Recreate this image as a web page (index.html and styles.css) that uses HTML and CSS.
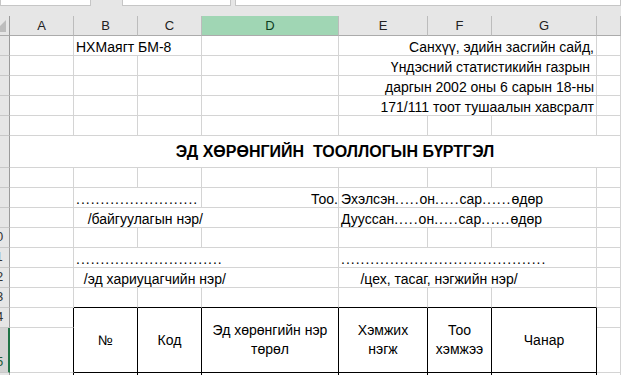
FILE: index.html
```html
<!doctype html>
<html lang="mn">
<head>
	<meta charset="UTF-8">
	<title>БМ-8</title>
	<link rel="stylesheet" href="styles.css">
</head>
<body>
<!--томьёоны мөр-->
<div class="topbar">
	<div class="box name"></div>
	<div class="box fx"></div>
	<div class="box formula"></div>
</div>
<!--хүснэгт-->
<div class="sheet">
	<!--баганын толгой-->
	<div class="h corner"><svg width="9" height="19" viewBox="0 0 9 19"><polygon points="0,10 6,4 6,16 0,16" fill="#bdbdbd"/></svg></div>
	<div class="h">A</div>
	<div class="h">B</div>
	<div class="h">C</div>
	<div class="h sel">D</div>
	<div class="h">E</div>
	<div class="h">F</div>
	<div class="h">G</div>
	<div class="h"></div>

	<!--1-->
	<div class="rh"><span>1</span></div>
	<div class="c"></div>
	<div class="c s2">НХМаягт БМ-8</div>
	<div class="c"></div>
	<div class="c s3 r">Санхүү, эдийн засгийн сайд,</div>
	<div class="c"></div>
	<!--2-->
	<div class="rh"><span>2</span></div>
	<div class="c"></div>
	<div class="c"></div>
	<div class="c"></div>
	<div class="c"></div>
	<div class="c s3 r">Үндэсний статистикийн газрын </div>
	<div class="c"></div>
	<!--3-->
	<div class="rh"><span>3</span></div>
	<div class="c"></div>
	<div class="c"></div>
	<div class="c"></div>
	<div class="c"></div>
	<div class="c s3 r">даргын 2002 оны 6 сарын 18-ны</div>
	<div class="c"></div>
	<!--4-->
	<div class="rh"><span>4</span></div>
	<div class="c"></div>
	<div class="c"></div>
	<div class="c"></div>
	<div class="c"></div>
	<div class="c s3 r">171/111 тоот тушаалын хавсралт</div>
	<div class="c"></div>
	<!--5-->
	<div class="rh"><span>5</span></div>
	<div class="c"></div>
	<div class="c"></div>
	<div class="c"></div>
	<div class="c"></div>
	<div class="c"></div>
	<div class="c"></div>
	<div class="c"></div>
	<div class="c"></div>
	<!--6 гарчиг-->
	<div class="rh"><span>6</span></div>
	<div class="c title">ЭД ХӨРӨНГИЙН  ТООЛЛОГЫН БҮРТГЭЛ</div>
	<!--7-->
	<div class="rh"><span>7</span></div>
	<div class="c"></div>
	<div class="c"></div>
	<div class="c"></div>
	<div class="c"></div>
	<div class="c"></div>
	<div class="c"></div>
	<div class="c"></div>
	<div class="c"></div>
	<!--8-->
	<div class="rh"><span>8</span></div>
	<div class="c"></div>
	<div class="c s2 dt">.........................</div>
	<div class="c r tight">Тоо.</div>
	<div class="c s3">Эхэлсэн<span class="dt">.....</span>он<span class="dt">.....</span>сар<span class="dt">......</span>өдөр</div>
	<div class="c"></div>
	<!--9-->
	<div class="rh"><span>9</span></div>
	<div class="c"></div>
	<div class="c s3">   /байгуулагын нэр/</div>
	<div class="c s3">Дууссан<span class="dt">.....</span>он<span class="dt">.....</span>сар<span class="dt">......</span>өдөр</div>
	<div class="c"></div>
	<!--10-->
	<div class="rh"><span>10</span></div>
	<div class="c"></div>
	<div class="c"></div>
	<div class="c"></div>
	<div class="c"></div>
	<div class="c"></div>
	<div class="c"></div>
	<div class="c"></div>
	<div class="c"></div>
	<!--11-->
	<div class="rh"><span>11</span></div>
	<div class="c"></div>
	<div class="c s3 dt">..............................</div>
	<div class="c s3 dt">..........................................</div>
	<div class="c"></div>
	<!--12-->
	<div class="rh"><span>12</span></div>
	<div class="c"></div>
	<div class="c s3">  /эд хариуцагчийн нэр/</div>
	<div class="c s3">     /цех, тасаг, нэгжийн нэр/</div>
	<div class="c"></div>
	<!--13-->
	<div class="rh"><span>13</span></div>
	<div class="c"></div>
	<div class="c tt"></div>
	<div class="c tt"></div>
	<div class="c tt"></div>
	<div class="c tt"></div>
	<div class="c tt"></div>
	<div class="c tt"></div>
	<div class="c"></div>
	<!--14-15 хүснэгтийн толгой-->
	<div class="rh"><span>14</span></div>
	<div class="c tl"></div>
	<div class="c t">№</div>
	<div class="c t">Код</div>
	<div class="c t">Эд хөрөнгийн нэр<br>төрөл</div>
	<div class="c t">Хэмжих<br>нэгж</div>
	<div class="c t">Тоо<br>хэмжээ</div>
	<div class="c t">Чанар</div>
	<div class="c"></div>
	<div class="rh rsel"><span>15</span></div>
	<div class="c tl"></div>
	<div class="c"></div>
	<!--16-->
	<div class="rh"><span>16</span></div>
	<div class="c tl"></div>
	<div class="c tb"></div>
	<div class="c tb"></div>
	<div class="c tb"></div>
	<div class="c tb"></div>
	<div class="c tb"></div>
	<div class="c tb"></div>
	<div class="c"></div>
</div>
</body>
</html>
```

FILE: styles.css
```css
*{margin:0;padding:0;box-sizing:border-box}
html,body{width:621px;height:375px;overflow:hidden}
body{background:#e6e6e6;font-family:"Liberation Sans",Arial,sans-serif;color:#000}

/*верхняя полоса*/
.topbar{display:flex;height:6px;margin-bottom:10px}
.box{height:6px;background:#fff;border:1px solid #c6c6c6;border-top:0}
.name{width:91px}
.fx{width:109px;margin-left:31px}
.formula{flex:1;margin-left:4px}

/*сетка*/
.sheet{
	display:grid;
	grid-template-columns:10px 64px 64px 64px 137px 89px 64px 105px 1fr;
	grid-template-rows:20px repeat(5,20px) 32px repeat(8,20px) 45px 20px;
	background:#fff;
}
.h{
	display:flex;
	align-items:center;
	justify-content:center;
	background:#e6e6e6;
	border-right:1px solid #bcbcbc;
	border-bottom:1px solid #ababab;
	font-size:13px;
	color:#222;
}
.h.sel{background:#a0d6b4;color:#0c3d1f}
.corner{justify-content:flex-start;border-right-color:#9b9b9b}
.corner svg{display:block}
.rh{
	display:flex;
	align-items:flex-end;
	overflow:hidden;
	background:#e6e6e6;
	border-right:1px solid #9b9b9b;
	border-bottom:1px solid #c8c8c8;
	font-size:13px;
	line-height:16px;
	color:#333;
	padding-bottom:2px;
}
.rh span{flex:none;width:26px;margin-left:-17px;text-align:center}
.rh.rsel{background:#d3d3d3;border-right:2px solid #217346;color:#1e5a35}

.c{
	display:flex;
	align-items:flex-end;
	overflow:hidden;
	white-space:pre;
	border-right:1px solid #d4d4d4;
	border-bottom:1px solid #d4d4d4;
	padding:0 2px;
	font-size:14px;
	line-height:16px;
}
.dt{letter-spacing:1px}
.s2{grid-column:span 2}
.s3{grid-column:span 3}
.r{justify-content:flex-end}
.tight{padding-right:0}
.title{
	grid-column:span 8;
	justify-content:center;
	align-items:center;
	padding:0 24px 0 64px;
	font-size:16px;
	font-weight:bold;
}

/*таблица*/
.tt{border-bottom-color:#000}
.tl{border-right-color:#000}
.t{
	grid-row:span 2;
	justify-content:center;
	align-items:center;
	text-align:center;
	white-space:normal;
	line-height:19px;
	border-right-color:#000;
	border-bottom-color:#000;
}
.tb{border-right-color:#000}
```
